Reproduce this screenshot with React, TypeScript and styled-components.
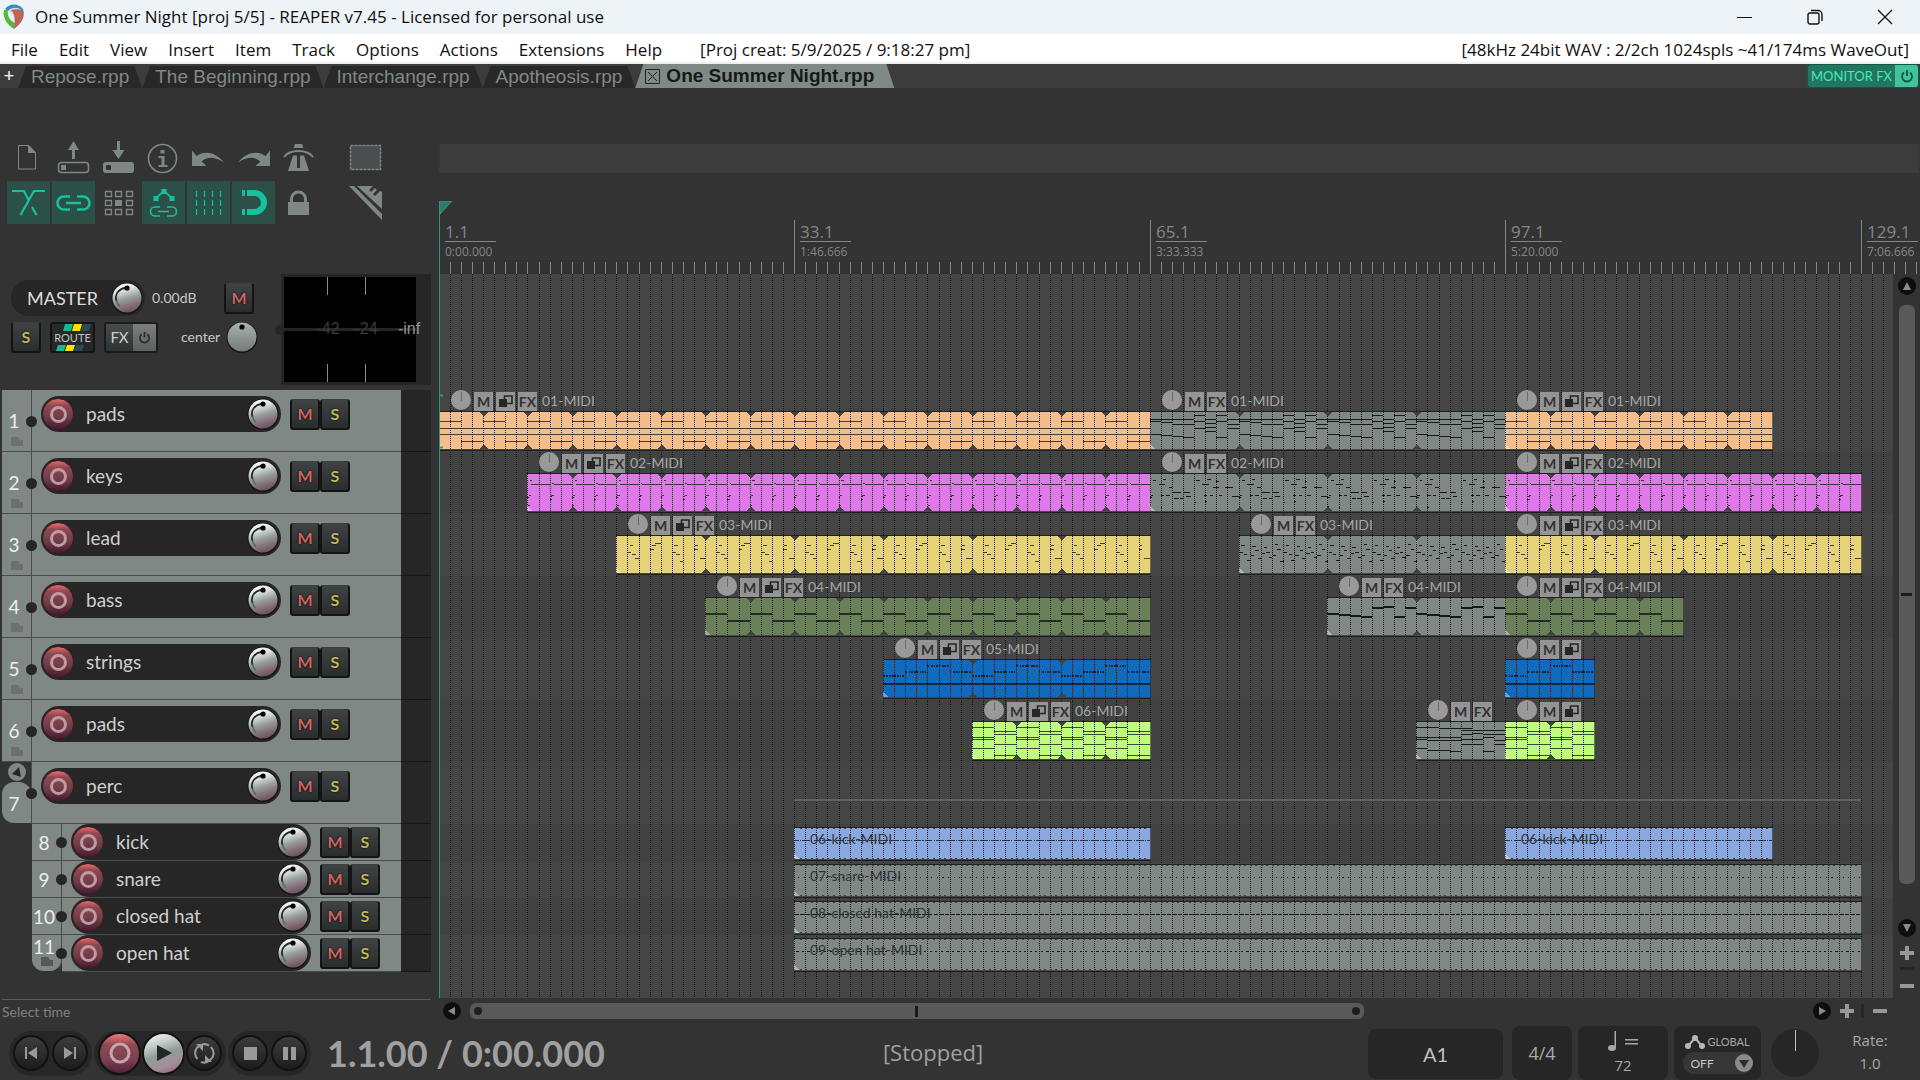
import React from "react";
import styled, { createGlobalStyle, css } from "styled-components";

const GlobalStyle = createGlobalStyle`
  *, *::before, *::after { box-sizing: border-box; }
  body { margin: 0; background: #333333; }
  button, input, select { font: inherit; color: inherit; margin: 0; padding: 0; border: 0; background: none; }
  ul, ol { list-style: none; margin: 0; padding: 0; }
  svg { display: block; }
`;

const ui = `"Open Sans", "Noto Sans", sans-serif`;
const face = `Lato, "Open Sans", sans-serif`;

/* ---------- geometry shared by the track list and the arrange view ---------- */

const MEASURE = 11.112;
const BIG = 62;
const SMALL = 37;
const px = (m: number) => Math.floor(m * MEASURE);

/* ---------- window chrome ---------- */

const Page = styled.div`
  min-height: 100vh;
  display: flex;
  flex-direction: column;
  background: #333333;
  font-family: ${face};
  color: #c8c8c8;
  overflow: hidden;
`;

const TitleBar = styled.header`
  height: 34px;
  display: flex;
  align-items: center;
  background: #eef3f8;
  color: #101010;
  font: 17px/24px ${ui};
`;

const Logo = styled.svg`
  width: 24px;
  height: 26px;
  margin: 0 9px 0 2px;
`;

const WindowButtons = styled.div`
  margin-left: auto;
  display: flex;
`;

const WindowButton = styled.button`
  width: 70px;
  height: 34px;
  display: grid;
  place-items: center;
`;

const MenuBar = styled.nav`
  height: 30px;
  display: flex;
  align-items: center;
  padding: 3px 11px 0 0;
  background: #ffffff;
  border-bottom: 2px solid #efefef;
  color: #101010;
  font: 17px/24px ${ui};
`;

const MenuItem = styled.button`
  padding: 0 10px 0 11px;
  white-space: nowrap;
`;

const Note = styled.span<{ $push?: boolean }>`
  white-space: nowrap;
  margin-left: ${(p) => (p.$push ? "auto" : "28px")};
`;

const TabBar = styled.div`
  height: 24px;
  display: flex;
  align-items: flex-end;
  background: #3c3c3c;
  font-family: "Liberation Sans", Arial, sans-serif;
`;

const AddTab = styled.button`
  width: 18px;
  height: 24px;
  color: #ffffff;
  font-size: 18px;
  line-height: 24px;
`;

const Tab = styled.button<{ $active?: boolean }>`
  display: flex;
  align-items: center;
  gap: 6px;
  white-space: nowrap;
  font-size: 19px;
  clip-path: polygon(8px 0, calc(100% - 8px) 0, 100% 100%, 0 100%);
  ${(p) =>
    p.$active
      ? css`
          height: 24px;
          padding: 0 20px 0 10px;
          background: #7f8a87;
          color: #161818;
          font-weight: bold;
          line-height: 24px;
        `
      : css`
          height: 22px;
          padding: 0 13px;
          background: #282828;
          color: #808886;
          line-height: 22px;
        `}
`;

const MonitorFx = styled.button`
  height: 24px;
  width: 112px;
  margin: 0 1px 0 auto;
  display: flex;
  align-items: stretch;
  border: 1px solid #0c5a46;
  border-radius: 4px;
  overflow: hidden;
  background: #22765f;
  color: #48e8b8;
  font: 13px/22px ${face};
`;

const MonitorText = styled.span`
  flex: 1;
  white-space: nowrap;
  text-align: center;
`;

const MonitorPower = styled.span`
  width: 23px;
  display: grid;
  place-items: center;
  background: #41c39b;
`;

/* ---------- workspace ---------- */

const Workspace = styled.main`
  flex: 1;
  display: grid;
  grid-template-columns: 439px minmax(0, 1fr);
`;

const LeftColumn = styled.section`
  display: flex;
  flex-direction: column;
  padding: 0 8px 0 2px;
`;

const Toolbar = styled.div`
  height: 186px;
  padding: 50px 0 0 5px;
  display: flex;
  flex-direction: column;
`;

const ToolRow = styled.div`
  display: flex;
  gap: 2px;
`;

const Tool = styled.button<{ $on?: boolean; $apart?: boolean }>`
  width: 43px;
  height: 43px;
  color: ${(p) => (p.$on ? "#16c19d" : "#808886")};
  background: ${(p) => (p.$on ? "#2b5048" : "transparent")};
  margin-left: ${(p) => (p.$apart ? "22px" : "0")};
`;

/* ---------- master panel ---------- */

const Master = styled.div`
  height: 116px;
  display: flex;
  justify-content: space-between;
`;

const MasterControls = styled.div`
  width: 256px;
  padding: 6px 0 0 9px;
  display: flex;
  flex-direction: column;
  gap: 3px;
`;

const ControlRow = styled.div<{ $inset?: boolean }>`
  height: 36px;
  padding-right: ${(p) => (p.$inset ? "4px" : "0")};
  display: flex;
  align-items: center;
`;

const MasterPill = styled.div`
  width: 134px;
  height: 36px;
  padding: 0 2px 0 16px;
  display: flex;
  align-items: center;
  justify-content: space-between;
  border-radius: 18px;
  background: #262626;
  font-size: 18px;
  line-height: 24px;
  color: #dcdcdc;
`;

const Readout = styled.span<{ $wide?: boolean }>`
  font-size: 14px;
  line-height: 20px;
  color: #c8c8c8;
  margin-left: ${(p) => (p.$wide ? "23px" : "7px")};
`;

const Push = styled.span`
  margin-left: auto;
  display: flex;
`;

const Meter = styled.div`
  position: relative;
  width: 150px;
  height: 111px;
  padding: 3px 15px 3px 3px;
  background: #262626;
`;

const MeterFace = styled.div`
  position: relative;
  height: 105px;
  background: linear-gradient(#262626, #262626) 0 51px / 100% 3px no-repeat,
    linear-gradient(#8a8a8a, #8a8a8a) 43px 0 / 1px 18px no-repeat,
    linear-gradient(#8a8a8a, #8a8a8a) 81px 0 / 1px 18px no-repeat,
    linear-gradient(#8a8a8a, #8a8a8a) 43px 100% / 1px 18px no-repeat,
    linear-gradient(#8a8a8a, #8a8a8a) 81px 100% / 1px 18px no-repeat, #000000;
`;

const MeterLabel = styled.span<{ $x: number; $bright?: boolean }>`
  position: absolute;
  top: 42px;
  left: ${(p) => p.$x}px;
  width: 28px;
  text-align: center;
  font: 16px/20px "Liberation Sans", Arial, sans-serif;
  color: ${(p) => (p.$bright ? "#8f9494" : "#3c3c3c")};
`;

const MeterDot = styled.span`
  position: absolute;
  left: -6px;
  top: 51px;
  width: 10px;
  height: 10px;
  border-radius: 50%;
  background: #262626;
`;

const Square = styled.button<{ $tone: string }>`
  width: 30px;
  height: 31px;
  display: grid;
  place-items: center;
  border: 2px solid #141414;
  border-top: 1px solid #3c3f3f;
  border-radius: 3px;
  background: linear-gradient(#3f4343, #2a2d2d);
  color: ${(p) => p.$tone};
  font: bold 16px/20px ${face};
  text-shadow: 0 0 2px #000000;
`;

const Route = styled.button`
  width: 45px;
  height: 31px;
  margin-left: 9px;
  overflow: hidden;
  border: 2px solid #141414;
  border-radius: 3px;
  color: #c4c4c4;
  font: 11px/14px ${face};
  text-align: center;
  display: flex;
  flex-direction: column;
  align-items: center;
  background: #262929;
`;

const FxPair = styled.span`
  display: flex;
  width: 54px;
  height: 31px;
  margin-left: 9px;
  border: 2px solid #1b1b1b;
  border-radius: 3px;
  overflow: hidden;
`;

const FxHalf = styled.button<{ $light?: boolean }>`
  flex: ${(p) => (p.$light ? "23" : "27")};
  display: grid;
  place-items: center;
  font: 15px/20px ${face};
  color: #cfcfcf;
  background: ${(p) =>
    p.$light ? "linear-gradient(#7b7f7f, #5c6060)" : "linear-gradient(#484c4c, #303333)"};
`;

/* ---------- knobs ---------- */

const KnobBox = styled.label<{ $size: number }>`
  position: relative;
  flex: none;
  width: ${(p) => p.$size}px;
  height: ${(p) => p.$size}px;
`;

const KnobInput = styled.input`
  position: absolute;
  inset: 0;
  width: 100%;
  height: 100%;
  opacity: 0;
`;

function Knob({ label, pan }: { label: string; pan?: boolean }) {
  return (
    <KnobBox $size={32}>
      <svg width="32" height="32" viewBox="0 0 32 32" aria-hidden="true">
        <defs>
          <linearGradient id="volFace" x1="0.35" y1="0" x2="0.65" y2="1">
            <stop offset="0" stopColor="#ffffff" />
            <stop offset="0.22" stopColor="#dfe3e2" />
            <stop offset="0.5" stopColor="#98a19e" />
            <stop offset="0.75" stopColor="#86707a" />
            <stop offset="1" stopColor="#64505b" />
          </linearGradient>
          <linearGradient id="panFace" x1="0" y1="0" x2="0" y2="1">
            <stop offset="0" stopColor="#aab2af" />
            <stop offset="1" stopColor="#747c79" />
          </linearGradient>
        </defs>
        <circle cx="16" cy="16.5" r="15.5" fill="#141414" />
        <circle cx="16" cy="16" r="14.5" fill={pan ? "url(#panFace)" : "url(#volFace)"} />
        {!pan && (
          <>
            <path d="M5.500 19C3.500 13 7 7 14 6" fill="none" stroke="#262b2a" strokeWidth="1.8" />
            <path d="M9 24.500C7 23 6 21 5.500 18.500" fill="none" stroke="#4d6a62" strokeWidth="1.5" />
          </>
        )}
        <circle cx="16" cy="6" r="2.6" fill="#000000" />
      </svg>
      <KnobInput type="range" min={0} max={100} defaultValue={50} aria-label={label} />
    </KnobBox>
  );
}

/* ---------- track list ---------- */

type Track = { n: number; name: string; kind: "normal" | "folder" | "child" | "last" };

const tracks: Track[] = [
  { n: 1, name: "pads", kind: "normal" },
  { n: 2, name: "keys", kind: "normal" },
  { n: 3, name: "lead", kind: "normal" },
  { n: 4, name: "bass", kind: "normal" },
  { n: 5, name: "strings", kind: "normal" },
  { n: 6, name: "pads", kind: "normal" },
  { n: 7, name: "perc", kind: "folder" },
  { n: 8, name: "kick", kind: "child" },
  { n: 9, name: "snare", kind: "child" },
  { n: 10, name: "closed hat", kind: "child" },
  { n: 11, name: "open hat", kind: "last" },
];

const TrackList = styled.ol`
  display: flex;
  flex-direction: column;
`;

const TrackRow = styled.li<{ $small: boolean }>`
  height: ${(p) => (p.$small ? SMALL : BIG)}px;
  padding-left: ${(p) => (p.$small ? 30 : 0)}px;
  display: grid;
  grid-template-columns: 30px minmax(0, 1fr) 30px;
`;

const NumberCell = styled.div<{ $kind: Track["kind"] }>`
  position: relative;
  display: flex;
  flex-direction: column;
  border-right: 1px solid #484d4b;
  border-bottom: 1px solid #484d4b;
  background: #808886;
  color: #eeeeee;
  font-size: 19px;
  line-height: 24px;
  ${(p) =>
    p.$kind === "folder" &&
    css`
      background: #333333;
      border-bottom-color: #333333;
    `}
  ${(p) =>
    p.$kind === "last" &&
    css`
      line-height: 20px;
      border-bottom-color: #333333;
      border-radius: 0 0 12px 12px;
    `}
`;

const numberTop = { normal: 19, folder: 0, child: 7, last: 2 };

const NumberText = styled.span<{ $kind: Track["kind"] }>`
  display: block;
  width: 24px;
  text-align: center;
  margin-top: ${(p) => numberTop[p.$kind]}px;
`;

const FolderBody = styled.div`
  flex: 1;
  padding-top: 10px;
  border-radius: 12px 12px 0 12px;
  background: #808886;
`;

const FolderToggle = styled.button`
  width: 18px;
  height: 18px;
  margin: 1px 0 1px 6px;
  display: grid;
  place-items: center;
  border-radius: 50%;
  background: #808886;
`;

const Dot = styled.span<{ $small: boolean }>`
  position: absolute;
  right: -6px;
  top: ${(p) => (p.$small ? 13 : 26)}px;
  width: 11px;
  height: 11px;
  border-radius: 50%;
  background: #262626;
`;

const FolderMark = styled.svg<{ $tight: boolean }>`
  flex: none;
  margin: ${(p) => (p.$tight ? 0 : 4)}px 0 0 9px;
`;

const Strip = styled.div<{ $small: boolean }>`
  display: flex;
  align-items: flex-start;
  padding: ${(p) => (p.$small ? 0 : 6)}px 0 0 9px;
  border-bottom: 1px solid #484d4b;
  background: #808886;
`;

const NamePill = styled.div`
  width: 240px;
  height: 36px;
  padding: 0 2px 0 1px;
  display: flex;
  align-items: center;
  border-radius: 18px;
  background: #262626;
`;

const RecArm = styled.button`
  width: 32px;
  height: 32px;
  border-radius: 50%;
  display: grid;
  place-items: center;
  border: 1px solid #3a1c24;
  background: linear-gradient(#e86a6c, #8e4850 22%, #6e3d48 60%, #471a30);
  &::after {
    content: "";
    width: 17px;
    height: 17px;
    border: 3px solid #c09aa0;
    border-radius: 50%;
  }
`;

const TrackName = styled.span`
  flex: 1;
  padding-left: 12px;
  font-size: 19px;
  line-height: 24px;
  color: #cfcfcf;
`;

const MuteSolo = styled.div`
  display: flex;
  margin: 3px 0 0 9px;
`;

const TrackMeter = styled.div`
  background: #262626;
  border-bottom: 1px solid #161616;
`;

function TrackItem({ t }: { t: Track }) {
  const small = t.kind === "child" || t.kind === "last";
  return (
    <TrackRow $small={small}>
      <NumberCell $kind={t.kind}>
        {t.kind === "folder" ? (
          <>
            <FolderToggle aria-label="Collapse folder">
              <svg width="12" height="12" viewBox="0 0 12 12">
                <path d="M1 8 8 1l2 10z" fill="#262626" />
              </svg>
            </FolderToggle>
            <FolderBody>
              <NumberText $kind="folder">{t.n}</NumberText>
            </FolderBody>
          </>
        ) : (
          <NumberText $kind={t.kind}>{t.n}</NumberText>
        )}
        {(t.kind === "normal" || t.kind === "last") && (
          <FolderMark $tight={small} width="12" height="9" viewBox="0 0 12 9">
            <path d="M0 0h7l2 3h3v6H0z" fill={small ? "#535958" : "#6a7170"} />
          </FolderMark>
        )}
        <Dot $small={small} />
      </NumberCell>
      <Strip $small={small}>
        <NamePill>
          <RecArm aria-label={`Record arm ${t.name}`} />
          <TrackName>{t.name}</TrackName>
          <Knob label={`Volume ${t.name}`} />
        </NamePill>
        <MuteSolo>
          <Square $tone="#cf6460">M</Square>
          <Square $tone="#c4b75c">S</Square>
        </MuteSolo>
      </Strip>
      <TrackMeter />
    </TrackRow>
  );
}

const Hint = styled.footer`
  margin-top: auto;
  height: 27px;
  border-top: 1px solid #5a5a5a;
  font-size: 14px;
  line-height: 24px;
  color: #808080;
`;

/* ---------- timeline ---------- */

const Timeline = styled.section`
  position: relative;
  display: flex;
  flex-direction: column;
  min-width: 0;
`;

const PlayCursor = styled.svg`
  position: absolute;
  left: 0;
  top: 113px;
  width: 14px;
  height: calc(100% - 141px);
  pointer-events: none;
`;

const RulerArea = styled.div`
  height: 186px;
  padding-top: 56px;
  display: flex;
  flex-direction: column;
  justify-content: space-between;
`;

const MarkerLane = styled.div`
  height: 29px;
  margin-right: 1px;
  background: #3c3c3c;
`;

const Ruler = styled.div`
  position: relative;
  height: 54px;
  overflow: hidden;
`;

const RulerTicks = styled.svg`
  position: absolute;
  inset: 0;
  width: 100%;
  height: 54px;
`;

const RulerLabel = styled.div`
  position: absolute;
  top: 0;
  padding-left: 6px;
  color: #868686;
`;

const Bar = styled.div`
  width: 51px;
  height: 22px;
  border-bottom: 1px solid #868686;
  font: 17px/24px ${ui};
`;

const Clock = styled.div`
  font: 12px/19px ${ui};
`;

const ArrangeRow = styled.div`
  flex: 1;
  display: flex;
  min-height: 0;
`;

const Arrange = styled.div`
  position: relative;
  flex: 1;
  min-width: 0;
  overflow: hidden;
  padding-top: 116px;
  background: #454545;
`;

const GridLines = styled.svg`
  position: absolute;
  inset: 0;
  width: 100%;
  height: 100%;
`;

const Lane = styled.div<{ $small: boolean; $odd: boolean }>`
  height: ${(p) => (p.$small ? SMALL : BIG)}px;
  background: ${(p) => (p.$odd ? "#424242" : "#454545")};
`;

const ItemLayer = styled.div`
  position: absolute;
  inset: 116px 0 0 0;
`;

const Clip = styled.div`
  position: absolute;
`;

const ClipHead = styled.div`
  height: 21px;
  padding-left: 12px;
  display: flex;
  align-items: flex-end;
  gap: 3px;
  white-space: nowrap;
`;

const ClipKnob = styled.button`
  width: 20px;
  height: 20px;
  margin-bottom: 1px;
  border-radius: 50%;
  background: linear-gradient(#6b6b6b, #6b6b6b) 50% 2px / 1px 9px no-repeat, #999999;
`;

const ClipButton = styled.button`
  width: 19px;
  height: 19px;
  display: grid;
  place-items: center;
  background: #949494;
  color: #333333;
  font: bold 14px/18px ${face};
`;

const ClipName = styled.span`
  padding: 0 0 1px 2px;
  font-size: 14px;
  line-height: 19px;
  color: #a2a6a6;
`;

const DrumName = styled.span`
  position: absolute;
  left: 16px;
  top: 2px;
  font-size: 14px;
  line-height: 19px;
  color: #303436;
  white-space: nowrap;
`;

/* [start measure, length in measures, y] */
type NoteMark = [number, number, number];
type Pattern = { loop: number; span: number; thick?: number; marks: NoteMark[] };

const both = (a: number, len: number, ys: number[]): NoteMark[] => ys.map((y) => [a, len, y]);

const patterns: Record<string, Pattern> = {
  padsLoop: { loop: 4, span: 4, marks: [[0, 2, 10], [0, 4, 17], [0, 4, 23], [2, 2, 30]] },
  padsGrey: {
    loop: 8,
    span: 8,
    marks: [
      [0, 4, 8], [0, 1, 10], [1, 1, 11], [2, 2, 13],
      [0, 1, 23], [1, 1, 24], [2, 1, 25], [3, 1, 26],
      ...both(4, 1, [4, 10, 17]), ...both(5, 1, [8, 12, 16, 20]),
      ...both(6, 1, [4, 10, 26]), ...both(7, 1, [8, 13, 17]),
    ],
  },
  keysLoop: {
    loop: 4,
    span: 4,
    marks: [
      [0.25, 0.2, 7], [0.35, 1.65, 11], [2.2, 0.15, 10], [2.35, 1.65, 11],
      [0, 0.15, 24], [0.1, 0.2, 22], [0.05, 0.15, 32],
      [2, 0.2, 26], [2.05, 0.15, 23], [2.15, 0.2, 22],
    ],
  },
  keysGrey: {
    loop: 8,
    span: 8,
    marks: [
      [0.3, 0.25, 7], [1.2, 0.3, 6], [4.2, 0.3, 7], [5.2, 0.3, 6], [6, 0.2, 8],
      [0.8, 0.6, 11], [1.7, 0.3, 14], [4.7, 0.6, 11], [5.7, 0.5, 14], [6.8, 0.7, 14],
      [2, 0.8, 19], [3, 0.6, 19], [1, 0.3, 22], [1.5, 0.3, 22], [0, 0.2, 24], [0.1, 0.2, 22],
      [2.2, 0.4, 25], [2.7, 0.4, 25], [3.3, 0.4, 23], [4, 0.2, 29], [5, 0.2, 28],
      [4.9, 0.3, 22], [5.4, 0.3, 22], [6.2, 0.3, 22], [7.4, 0.6, 23], [1, 0.15, 34], [0, 0.1, 33],
    ],
  },
  leadLoop: {
    loop: 8,
    span: 8,
    marks: [
      [1.2, 0.3, 10], [1, 0.35, 17], [1.4, 0.35, 19], [1.7, 0.35, 23],
      [3, 0.35, 14], [3.25, 0.35, 10], [3.5, 0.5, 8],
      [5.2, 0.35, 10], [5, 0.35, 17], [5.35, 0.35, 19], [5.7, 0.3, 26],
      [7, 0.35, 14], [7.1, 0.25, 10], [7.5, 0.5, 23],
    ],
  },
  leadGrey: {
    loop: 8,
    span: 8,
    marks: Array.from({ length: 8 }).flatMap((_, i): NoteMark[] => [
      [i + 0.25, 0.3, [10, 11, 12, 9][i % 4]],
      [i + 0.5, 0.3, [19, 15, 17, 14][i % 4]],
      [i + 0.1, 0.3, [17, 20, 18, 20][i % 4]],
      [i + 0.75, 0.3, [25, 23, 22, 26][i % 4]],
    ]),
  },
  bassLoop: { loop: 4, span: 4, thick: 2, marks: [[0, 2, 16], [2, 2, 23]] },
  bassGrey: {
    loop: 8,
    span: 8,
    thick: 2,
    marks: [
      [0, 1, 16], [1, 1, 17], [2, 1, 18], [3, 1, 19],
      [4, 1, 10], [5, 1, 9], [6, 1, 19], [7, 1, 10],
    ],
  },
  strings: {
    loop: 8,
    span: 8,
    thick: 2,
    marks: [
      ...[[0, 16], [2, 12], [4, 6], [6, 12]].flatMap(([a, y]): NoteMark[] =>
        [0, 0.3, 0.55, 0.8, 1, 1.3, 1.5, 1.75].map((d): NoteMark => [a + d, 0.16, y])
      ),
      [0, 8, 24],
    ],
  },
  pads6Loop: {
    loop: 4,
    span: 4,
    marks: [...both(0, 2, [6, 16, 18, 27]), ...both(2, 2, [10, 13, 23, 34])],
  },
  pads6Grey: {
    loop: 8,
    span: 8,
    marks: [
      [0, 2, 6], [2, 3, 7], [4, 1, 9], [5, 3, 9], [0, 4, 16], [0, 1, 18], [1, 3, 19],
      [4, 1, 13], [5, 1, 12], [6, 2, 13], [4, 2, 18], [6, 1, 16], [7, 1, 19],
      [0, 1, 27], [1, 1, 29], [2, 1, 29], [3, 1, 30], [4, 2, 23], [6, 1, 30], [7, 1, 23],
    ],
  },
  kick: { loop: 0.5, span: 1, marks: [[0, 0.45, 13], [0.55, 0.1, 13], [0.75, 0.25, 13]] },
  snare: { loop: 0.5, span: 1, marks: [[0.35, 0.1, 13], [0.85, 0.1, 13]] },
  closed: { loop: 0.5, span: 1, marks: [[0, 0.45, 13], [0.55, 0.4, 13]] },
  open: { loop: 0.5, span: 1, marks: [[0.2, 0.2, 13], [0.7, 0.2, 13]] },
};

const grey = "#808886";

type ClipData = {
  lane: number;
  from: number;
  to: number;
  color: string;
  pattern: string;
  name?: string;
  pooled?: boolean;
  fx?: boolean;
  inner?: boolean;
};

const clips: ClipData[] = [
  { lane: 0, from: 0, to: 64, color: "#f5bd88", pattern: "padsLoop", name: "01-MIDI", pooled: true, fx: true },
  { lane: 0, from: 64, to: 96, color: grey, pattern: "padsGrey", name: "01-MIDI", fx: true },
  { lane: 0, from: 96, to: 120, color: "#f5bd88", pattern: "padsLoop", name: "01-MIDI", pooled: true, fx: true },
  { lane: 1, from: 8, to: 64, color: "#df78e8", pattern: "keysLoop", name: "02-MIDI", pooled: true, fx: true },
  { lane: 1, from: 64, to: 96, color: grey, pattern: "keysGrey", name: "02-MIDI", fx: true },
  { lane: 1, from: 96, to: 128, color: "#df78e8", pattern: "keysLoop", name: "02-MIDI", pooled: true, fx: true },
  { lane: 2, from: 16, to: 64, color: "#e6d277", pattern: "leadLoop", name: "03-MIDI", pooled: true, fx: true },
  { lane: 2, from: 72, to: 96, color: grey, pattern: "leadGrey", name: "03-MIDI", fx: true },
  { lane: 2, from: 96, to: 128, color: "#e6d277", pattern: "leadLoop", name: "03-MIDI", pooled: true, fx: true },
  { lane: 3, from: 24, to: 64, color: "#698058", pattern: "bassLoop", name: "04-MIDI", pooled: true, fx: true },
  { lane: 3, from: 80, to: 96, color: grey, pattern: "bassGrey", name: "04-MIDI", fx: true },
  { lane: 3, from: 96, to: 112, color: "#698058", pattern: "bassLoop", name: "04-MIDI", pooled: true, fx: true },
  { lane: 4, from: 40, to: 64, color: "#106bbf", pattern: "strings", name: "05-MIDI", pooled: true, fx: true },
  { lane: 4, from: 96, to: 104, color: "#106bbf", pattern: "strings", pooled: true },
  { lane: 5, from: 48, to: 64, color: "#bffc7c", pattern: "pads6Loop", name: "06-MIDI", pooled: true, fx: true },
  { lane: 5, from: 88, to: 96, color: grey, pattern: "pads6Grey", fx: true },
  { lane: 5, from: 96, to: 104, color: "#bffc7c", pattern: "pads6Loop", pooled: true },
  { lane: 7, from: 32, to: 64, color: "#8aa8e0", pattern: "kick", name: "06-kick-MIDI", inner: true },
  { lane: 7, from: 96, to: 120, color: "#8aa8e0", pattern: "kick", name: "06-kick-MIDI", inner: true },
  { lane: 8, from: 32, to: 128, color: grey, pattern: "snare", name: "07-snare-MIDI", inner: true },
  { lane: 9, from: 32, to: 128, color: grey, pattern: "closed", name: "08-closed hat-MIDI", inner: true },
  { lane: 10, from: 32, to: 128, color: grey, pattern: "open", name: "09-open hat-MIDI", inner: true },
];

const laneTop = (lane: number) => Math.min(lane, 7) * BIG + Math.max(0, lane - 7) * SMALL;

function ClipBody({ c }: { c: ClipData }) {
  const p = patterns[c.pattern];
  const x0 = px(c.from);
  const width = px(c.to) - x0 + 1;
  const height = c.inner ? 34 : 40;
  const foot = height - 2;
  const thick = p.thick ?? 1;
  let notes = "";
  for (let m = c.from; m < c.to; m += p.span) {
    for (const [a, len, y] of p.marks) {
      const left = px(m + a) - x0;
      const w = Math.max(1, px(Math.min(m + a + len, c.to)) - x0 - left);
      notes += `M${left} ${y}h${w}v${thick}h${-w}z`;
    }
  }
  let notches = "";
  const r = c.inner ? 1 : 4;
  for (let m = c.from + p.loop; m < c.to; m += p.loop) {
    const x = px(m) - x0;
    notches += `M${x - r} 1h${2 * r + 1}l${-r} ${r}h-1zM${x - r} ${foot}h${2 * r + 1}l${-r} ${-r}h-1z`;
  }
  let lines = "";
  for (let m = c.from; m < c.to; m += 1) lines += `M${px(m) - x0 + 0.5} 1V${foot}`;
  return (
    <svg width={width} height={height} shapeRendering="crispEdges" aria-hidden="true">
      <rect width={width} height={height} fill="#484848" />
      <rect y="1" width={width} height={foot - 1} fill={c.color} />
      <path d={notes} fill="#101214" fillOpacity={c.color === grey ? 0.95 : 0.75} />
      <path d={lines} stroke="#101010" strokeDasharray="1 1" />
      <path d={notches} fill="#424242" />
      <path d={`M0 ${foot - 5}l5 5H0z`} fill="#ffffff" fillOpacity="0.4" />
      <rect width={width} height="1" fill="#222222" />
      <rect y={height - 1} width={width} height="1" fill="#1e1e1e" />
      <rect x={width - 1} width="1" height={height} fill="#222222" fillOpacity="0.6" />
    </svg>
  );
}

function ClipView({ c }: { c: ClipData }) {
  return (
    <Clip style={{ left: px(c.from), top: laneTop(c.lane) + (c.inner ? 3 : 0) }}>
      {!c.inner && (
        <ClipHead>
          <ClipKnob aria-label="Item volume" />
          <ClipButton>M</ClipButton>
          {c.pooled && (
            <ClipButton aria-label="Pooled source">
              <svg width="15" height="13" viewBox="0 0 15 13">
                <path d="M6.500 1h7.500v7.500H6.500z" fill="none" stroke="#262626" strokeWidth="1.600" />
                <path d="M1 4h8v8H1z" fill="#262626" />
              </svg>
            </ClipButton>
          )}
          {c.fx && <ClipButton>FX</ClipButton>}
          {c.name && <ClipName>{c.name}</ClipName>}
        </ClipHead>
      )}
      <ClipBody c={c} />
      {c.inner && <DrumName>{c.name}</DrumName>}
    </Clip>
  );
}

const FolderTrace = styled.div`
  position: absolute;
  height: 2px;
  background: #606060;
`;

const ticks = Array.from({ length: 360 }, (_, i) => i);
const rulerMarks = [
  { m: 0, bar: "1.1", time: "0:00.000" },
  { m: 32, bar: "33.1", time: "1:46.666" },
  { m: 64, bar: "65.1", time: "3:33.333" },
  { m: 96, bar: "97.1", time: "5:20.000" },
  { m: 128, bar: "129.1", time: "7:06.666" },
];

/* ---------- scroll bars ---------- */

const VScroll = styled.div`
  width: 27px;
  padding: 3px 0 5px;
  display: flex;
  flex-direction: column;
  align-items: center;
`;

const HScroll = styled.div`
  height: 28px;
  padding: 0 33px 2px 4px;
  display: flex;
  align-items: center;
`;

const RoundArrow = styled.button`
  width: 18px;
  height: 18px;
  flex: none;
  display: grid;
  place-items: center;
  border-radius: 50%;
  background: #0e0e0e;
`;

const VTrack = styled.div`
  flex: 1;
  width: 16px;
  padding: 10px 0 35px;
  display: flex;
`;

const VThumb = styled.div`
  flex: 1;
  border-radius: 6px;
  background: linear-gradient(#1c1c1c, #1c1c1c) 50% 50% / 11px 3px no-repeat, #595959;
`;

const HTrack = styled.div`
  flex: 1;
  margin: 0 9px;
`;

const HThumb = styled.div`
  width: 67%;
  height: 16px;
  padding: 0 4px;
  display: flex;
  justify-content: space-between;
  align-items: center;
  border-radius: 6px;
  background: linear-gradient(#1c1c1c, #1c1c1c) 50% 50% / 3px 11px no-repeat, #595959;
`;

const Grip = styled.span`
  width: 8px;
  height: 8px;
  border-radius: 50%;
  background: #1e1e1e;
`;

const ZoomButton = styled.button<{ $vertical?: boolean }>`
  width: 14px;
  height: 14px;
  flex: none;
  margin: ${(p) => (p.$vertical ? "9px 0 0" : "0 0 0 9px")};
`;

const ZoomGap = styled.span<{ $vertical?: boolean }>`
  flex: none;
  background: #262626;
  width: ${(p) => (p.$vertical ? "14px" : "3px")};
  height: ${(p) => (p.$vertical ? "3px" : "14px")};
  margin: ${(p) => (p.$vertical ? "7px 0 0" : "0 0 0 7px")};
`;

const Plus = () => (
  <svg width="14" height="14" viewBox="0 0 14 14">
    <path d="M5 0h4v5h5v4H9v5H5V9H0V5h5z" fill="#989898" />
  </svg>
);
const Minus = () => (
  <svg width="14" height="14" viewBox="0 0 14 14">
    <path d="M0 5h14v4H0z" fill="#989898" />
  </svg>
);
const Arrow = ({ d }: { d: string }) => (
  <svg width="10" height="10" viewBox="0 0 10 10">
    <path d={d} fill="#8c8c8c" />
  </svg>
);

/* ---------- transport ---------- */

const Transport = styled.footer`
  height: 54px;
  display: flex;
  align-items: center;
  padding: 0 25px 0 9px;
`;

const Cluster = styled.div<{ $gap?: number }>`
  height: 45px;
  margin-right: 2px;
  padding: 0 4px;
  display: flex;
  align-items: center;
  gap: ${(p) => p.$gap ?? 3}px;
  border-radius: 23px;
  background: #272727;
`;

const faces = {
  dark: "linear-gradient(#3c3c3c, #1c1c1c)",
  rec: "linear-gradient(#f07678, #8e4850 28%, #7c4250 65%, #54203a)",
  play: "linear-gradient(160deg, #ffffff, #c2cac7 30%, #8f9d98 50%, #a58e9a 75%, #84606f)",
};

const RoundButton = styled.button<{ $face: keyof typeof faces }>`
  width: ${(p) => (p.$face === "dark" ? 36 : 43)}px;
  height: ${(p) => (p.$face === "dark" ? 36 : 43)}px;
  flex: none;
  display: grid;
  place-items: center;
  border: 2px solid #121212;
  border-radius: 50%;
  background: ${(p) => faces[p.$face]};
`;

const Position = styled.output`
  margin-left: 14px;
  flex: 55 1 0;
  white-space: nowrap;
  font: bold 36px/44px ${face};
  color: #a0a0a0;
`;

const State = styled.output`
  flex: 48 1 0;
  font: 22px/28px ${ui};
  padding-bottom: 2px;
  color: #a0a0a0;
`;

const Right = styled.div`
  display: flex;
  justify-content: flex-end;
  align-items: center;
`;

const Panel = styled.div<{ $w: number }>`
  width: ${(p) => p.$w}px;
  height: 54px;
  margin-left: 6px;
  flex: none;
  display: flex;
  flex-direction: column;
  align-items: center;
  justify-content: center;
  border-radius: 8px;
  background: #262626;
  color: #a8a8a8;
`;

const Selection = styled.button`
  width: 135px;
  height: 50px;
  margin: 2px 3px 0 0;
  border-radius: 8px;
  background: #262626;
  color: #c0c0c0;
  font-size: 20px;
  line-height: 24px;
`;

const Signature = styled.button`
  font: 18px/24px ${ui};
`;

const Tempo = styled.label`
  display: flex;
  flex-direction: column;
  align-items: center;
`;

const NumberField = styled.input`
  width: 50px;
  height: 22px;
  text-align: center;
  font: 15px/22px ${ui};
  color: #a8a8a8;
`;

const GlobalHead = styled.label`
  display: flex;
  align-items: center;
  gap: 2px;
  font-size: 11px;
  line-height: 20px;
`;

const GlobalMode = styled.div`
  position: relative;
  width: 70px;
  height: 22px;
  border-radius: 11px;
  background: #363636;
`;

const GlobalSelect = styled.select`
  appearance: none;
  width: 70px;
  height: 22px;
  padding-left: 8px;
  font: 12px/22px ${face};
  color: #c8c8c8;
`;

const Caret = styled.svg`
  position: absolute;
  right: 0;
  top: 2px;
  pointer-events: none;
`;

const RateKnob = styled.button`
  width: 48px;
  height: 48px;
  margin: 0 26px 0 10px;
  flex: none;
  border-radius: 50%;
  background: linear-gradient(#c0c0c0, #c0c0c0) 50% 1px / 1px 21px no-repeat, #262626;
`;

const Rate = styled.label`
  width: 50px;
  display: flex;
  flex-direction: column;
  align-items: center;
  padding-bottom: 4px;
  font: 15px/24px ${ui};
  color: #a8a8a8;
`;

/* ---------- icons ---------- */

const s = { fill: "none", stroke: "currentColor" } as const;
const Ico = ({ children }: { children: React.ReactNode }) => (
  <svg width="43" height="43" viewBox="0 0 43 43" fill="currentColor" aria-hidden="true">
    {children}
  </svg>
);

const topTools = [
  { label: "New project", icon: <><path {...s} d="M11.5 7.5h10.500l6.500 7v16.500h-17z" /><path d="M21 7v8h8z" /></> },
  { label: "Open project", icon: <><path d="M16 12 21.500 3 27 12h-4v9h-3v-9z" /><rect {...s} strokeWidth="1.6" x="6.500" y="24.500" width="30" height="10" rx="3" /><path d="M9 27h5v5H9z" /></> },
  { label: "Save project", icon: <><path d="M20 3h3v9h4.500l-6 9-6-9H20z" /><rect x="6" y="24" width="31" height="11" rx="3" /><rect x="9" y="27" width="5" height="5" rx="1" fill="#333333" /></> },
  { label: "Project settings", icon: <><circle {...s} strokeWidth="1.6" cx="20.500" cy="20.500" r="14" /><path d="M18.500 12h4v3.500h-4zM16.500 18h6v9h3v2h-9v-2h3v-7h-3z" /></> },
  { label: "Undo", icon: <path d="M5 12.500v15.500h14.500l-5-4.500c6-5 13-5 22.500 1C29 14 17 12 9.500 18z" /> },
  { label: "Redo", icon: <path d="M38 12.500v15.500H23.500l5-4.500C22.500 18.500 15.500 18.500 6 24.500 14 14 26 12 33.500 18z" /> },
  { label: "Metronome", icon: <><path d="M18 6h7l1.500 4h-10z" /><path {...s} strokeWidth="2" d="M7 19C13 11 30 11 36 19" /><path d="M16 17.500h4V30h3V17.500h4L32 33H11z" /></> },
];

const bottomTools = [
  { label: "Auto crossfade", on: true, icon: <path {...s} strokeWidth="2.200" d="M5 10h12l5 10M25 26l4.500 8M38 10H27L13.500 34" /> },
  { label: "Item grouping", on: true, icon: <path {...s} strokeWidth="2.600" d="M18 15.500H12a6.500 6.500 0 0 0 0 13h6M25 15.500h6a6.500 6.500 0 0 1 0 13h-6M14 22h15" /> },
  { label: "Ripple editing", icon: <><path {...s} strokeWidth="1.300" d="M8.500 10.500h6v5h-6zM18.500 10.500h6v5h-6zM29.500 10.500h6v5h-6zM8.500 19.500h6v5h-6zM29.500 19.500h6v5h-6zM8.500 28.500h6v5h-6zM18.500 28.500h6v5h-6zM29.500 28.500h6v5h-6z" /><path d="M18 19h7v6h-7z" /></> },
  { label: "Move envelopes with items", on: true, icon: <><path {...s} strokeWidth="1.800" d="M14 17l8-7 8 7" /><path d="M11.500 15h5v5h-5zM19.500 8h5v5h-5zM27.500 15h5v5h-5z" /><path {...s} strokeWidth="1.600" d="M18 26h-5a4.500 4.500 0 0 0 0 9h5M25 26h5a4.500 4.500 0 0 1 0 9h-5M16 30.500h11" /></> },
  { label: "Grid lines", on: true, icon: <path {...s} strokeWidth="1.200" strokeDasharray="6 3" d="M9.500 10v25M17.500 10v25M25.500 10v25M33.500 10v25" /> },
  { label: "Snap to grid", on: true, icon: <><path d="M10 9h3v6h-3zM10 28h3v6h-3z" /><path {...s} strokeWidth="6" d="M15 12h7.500a9.500 9.500 0 0 1 0 19H15" /></> },
  { label: "Locking", icon: <><path {...s} strokeWidth="3" d="M14.500 24v-6a7 7 0 0 1 14 0v6" /><path d="M11 21h21v13H11z" /></> },
];

const Power = ({ color, size }: { color: string; size: number }) => (
  <svg width={size} height={size} viewBox="0 0 14 14" fill="none" stroke={color} strokeWidth="1.800">
    <path d="M4 3.500a5 5 0 1 0 6 0M7 1v6" />
  </svg>
);

export default function App() {
  return (
    <Page>
      <GlobalStyle />
      <TitleBar>
        <Logo viewBox="0 0 24 26">
          <path d="M3 5C7-1 17-1 21 5l1 5-5-4C13 3 9 4 6 7z" fill="#2c8ed0" />
          <path d="M2 6c-2 7 3 15 10 19l1-6C7 16 5 11 6 6z" fill="#58b83a" />
          <path d="M6 7C10 3 16 3 19 6c-1 5-3 9-6 13-2-4 0-7-7-12z" fill="#ded8d6" />
          <path d="M9 6c5-1 9-1 12 1 3 6-3 14-9 18 1-8 2-14-3-19z" fill="#bb6459" />
        </Logo>
        One Summer Night [proj 5/5] - REAPER v7.45 - Licensed for personal use
        <WindowButtons>
          <WindowButton aria-label="Minimize">
            <svg width="16" height="16"><path d="M0 8.500h15" stroke="#111" /></svg>
          </WindowButton>
          <WindowButton aria-label="Restore">
            <svg width="16" height="16" fill="none" stroke="#111" strokeWidth="1.400">
              <rect x="1" y="4" width="11" height="11" rx="2" />
              <path d="M4 1.500h7a4 4 0 0 1 4 4V12" />
            </svg>
          </WindowButton>
          <WindowButton aria-label="Close">
            <svg width="16" height="16"><path d="M1 1l14 14M15 1 1 15" stroke="#111" strokeWidth="1.300" /></svg>
          </WindowButton>
        </WindowButtons>
      </TitleBar>
      <MenuBar>
        {["File", "Edit", "View", "Insert", "Item", "Track", "Options", "Actions", "Extensions", "Help"].map((m) => (
          <MenuItem key={m}>{m}</MenuItem>
        ))}
        <Note>[Proj creat: 5/9/2025 / 9:18:27 pm]</Note>
        <Note $push>[48kHz 24bit WAV : 2/2ch 1024spls ~41/174ms WaveOut]</Note>
      </MenuBar>
      <TabBar>
        <AddTab aria-label="New project tab">+</AddTab>
        {["Repose.rpp", "The Beginning.rpp", "Interchange.rpp", "Apotheosis.rpp"].map((t) => (
          <Tab key={t}>{t}</Tab>
        ))}
        <Tab $active>
          <svg width="15" height="15" fill="none" stroke="#202424">
            <path d="M.5.500h14v14H.5zM3 3l9 9M12 3l-9 9" />
          </svg>
          One Summer Night.rpp
        </Tab>
        <MonitorFx>
          <MonitorText>MONITOR FX</MonitorText>
          <MonitorPower><Power color="#0c5a46" size={14} /></MonitorPower>
        </MonitorFx>
      </TabBar>

      <Workspace>
        <LeftColumn>
          <Toolbar>
            <ToolRow>
              {topTools.map((t) => (
                <Tool key={t.label} aria-label={t.label}><Ico>{t.icon}</Ico></Tool>
              ))}
              <Tool $apart aria-label="Marquee selection">
                <Ico><rect x="6.500" y="7.500" width="30" height="24" fill="#4a4f50" stroke="currentColor" strokeWidth="1.500" strokeDasharray="3 1" /></Ico>
              </Tool>
            </ToolRow>
            <ToolRow>
              {bottomTools.map((t) => (
                <Tool key={t.label} $on={t.on} aria-label={t.label}><Ico>{t.icon}</Ico></Tool>
              ))}
              <Tool $apart aria-label="Razor edit">
                <Ico>
                  <path d="M5 5h5l28 28v6z" />
                  <path d="M13 5h16l-4 4 2 2 4-4 2 2-4 4 2 2 5-5 2 1v17z" />
                </Ico>
              </Tool>
            </ToolRow>
          </Toolbar>

          <Master>
            <MasterControls>
              <ControlRow $inset>
                <MasterPill>MASTER<Knob label="Master volume" /></MasterPill>
                <Readout>0.00dB</Readout>
                <Push><Square $tone="#cf6460">M</Square></Push>
              </ControlRow>
              <ControlRow>
                <Square $tone="#c4b75c">S</Square>
                <Route>
                  <svg width="41" height="7"><path d="M13 0h8l-2 7h-8z" fill="#17b894" /><path d="M22 0h8l-2 7h-8z" fill="#ffe000" /><path d="M31 0h8l-2 7h-8z" fill="#2c4a5c" /></svg>
                  ROUTE
                  <svg width="41" height="6"><path d="M6 0h8l-2 6H4z" fill="#17b894" /><path d="M15 0h8l-2 6h-8z" fill="#ffe000" /><path d="M24 0h8l-2 6h-8z" fill="#2c4a5c" /></svg>
                </Route>
                <FxPair>
                  <FxHalf>FX</FxHalf>
                  <FxHalf $light aria-label="Bypass effects"><Power color="#2a2a2a" size={13} /></FxHalf>
                </FxPair>
                <Readout $wide>center</Readout>
                <Push><Knob pan label="Master pan" /></Push>
              </ControlRow>
            </MasterControls>
            <Meter>
              <MeterFace>
                <MeterLabel $x={30}>-42</MeterLabel>
                <MeterLabel $x={68}>-24</MeterLabel>
                <MeterLabel $x={111} $bright>-inf</MeterLabel>
              </MeterFace>
              <MeterDot />
            </Meter>
          </Master>

          <TrackList>
            {tracks.map((t) => <TrackItem key={t.n} t={t} />)}
          </TrackList>
          <Hint>Select time</Hint>
        </LeftColumn>

        <Timeline>
          <RulerArea>
            <MarkerLane />
            <Ruler>
              <RulerTicks shapeRendering="crispEdges">
                <path d={ticks.map((i) => `M${px(i) + 0.5} ${i % 32 ? 42 : 0}V54`).join("")} stroke="#868686" />
              </RulerTicks>
              {rulerMarks.map((r) => (
                <RulerLabel key={r.m} style={{ left: px(r.m) }}>
                  <Bar>{r.bar}</Bar>
                  <Clock>{r.time}</Clock>
                </RulerLabel>
              ))}
            </Ruler>
          </RulerArea>
          <ArrangeRow>
            <Arrange>
              {tracks.map((t, i) => <Lane key={t.n} $small={i > 6} $odd={i % 2 === 1} />)}
              <GridLines shapeRendering="crispEdges">
                <path d={ticks.map((i) => `M${px(i) + 0.5} 0V2400`).join("")} stroke="#121212" strokeDasharray="1 1" />
              </GridLines>
              <ItemLayer>
                <FolderTrace style={{ left: px(32), top: laneTop(6) + 37, width: px(128) - px(32) }} />
                {clips.map((c) => <ClipView key={`${c.lane}-${c.from}`} c={c} />)}
              </ItemLayer>
            </Arrange>
            <VScroll>
              <RoundArrow aria-label="Scroll up"><Arrow d="M5 1l4 8H1z" /></RoundArrow>
              <VTrack><VThumb /></VTrack>
              <RoundArrow aria-label="Scroll down"><Arrow d="M5 9 1 1h8z" /></RoundArrow>
              <ZoomButton $vertical aria-label="Zoom in vertically"><Plus /></ZoomButton>
              <ZoomGap $vertical />
              <ZoomButton $vertical aria-label="Zoom out vertically"><Minus /></ZoomButton>
            </VScroll>
          </ArrangeRow>
          <HScroll>
            <RoundArrow aria-label="Scroll left"><Arrow d="M1 5l7-4v8z" /></RoundArrow>
            <HTrack><HThumb><Grip /><Grip /></HThumb></HTrack>
            <RoundArrow aria-label="Scroll right"><Arrow d="M9 5 2 1v8z" /></RoundArrow>
            <ZoomButton aria-label="Zoom in"><Plus /></ZoomButton>
            <ZoomGap />
            <ZoomButton aria-label="Zoom out"><Minus /></ZoomButton>
          </HScroll>
          <PlayCursor>
            <path d="M0 0h13L1 13z" fill="#2f7a6b" stroke="#7e9a93" strokeWidth="0.600" />
            <path d="M.5 0V2400" stroke="#2f9482" />
            <path d="M0 194.500h4M0 246.500h4" stroke="#2f9482" strokeWidth="2" />
          </PlayCursor>
        </Timeline>
      </Workspace>

      <Transport>
        <Cluster>
          <RoundButton $face="dark" aria-label="Go to start">
            <svg width="14" height="12" fill="#9a9a9a"><path d="M1 0h2v12H1zM13 0v12L4 6z" /></svg>
          </RoundButton>
          <RoundButton $face="dark" aria-label="Go to end">
            <svg width="14" height="12" fill="#9a9a9a"><path d="M11 0h2v12h-2zM1 0v12l9-6z" /></svg>
          </RoundButton>
        </Cluster>
        <Cluster $gap={1}>
          <RoundButton $face="rec" aria-label="Record">
            <svg width="22" height="22" fill="none" stroke="#c9a4aa" strokeWidth="3"><circle cx="11" cy="11" r="9" /></svg>
          </RoundButton>
          <RoundButton $face="play" aria-label="Play">
            <svg width="16" height="16" fill="#262626"><path d="M1 0v16l15-8z" /></svg>
          </RoundButton>
          <RoundButton $face="dark" aria-label="Repeat">
            <svg width="22" height="22" viewBox="0 0 22 22" fill="none" stroke="#9a9a9a" strokeWidth="2">
              <path d="M4.500 17A8.500 8.500 0 0 1 6 4M8 20a8.500 8.500 0 0 0 9-2M18 5a8.500 8.500 0 0 1-1 13M9 2.500a8.500 8.500 0 0 1 7 1" />
              <path d="M3 2h7v7zM19 20h-7v-7z" fill="#9a9a9a" stroke="none" />
            </svg>
          </RoundButton>
        </Cluster>
        <Cluster>
          <RoundButton $face="dark" aria-label="Stop">
            <svg width="13" height="13" fill="#9a9a9a"><path d="M0 0h13v13H0z" /></svg>
          </RoundButton>
          <RoundButton $face="dark" aria-label="Pause">
            <svg width="13" height="13" fill="#9a9a9a"><path d="M0 0h5v13H0zM8 0h5v13H8z" /></svg>
          </RoundButton>
        </Cluster>
        <Position>1.1.00 / 0:00.000</Position>
        <State>[Stopped]</State>
        <Right>
          <Selection>A1</Selection>
          <Panel $w={60}><Signature>4/4</Signature></Panel>
          <Panel $w={90}>
            <Tempo>
              <svg width="32" height="24" viewBox="0 0 32 24" fill="#a8a8a8">
                <ellipse cx="5" cy="18" rx="4" ry="3" />
                <path d="M7.500 1h1.500v17H7.500zM18 9h13v1.500H18zM18 13h13v1.500H18z" />
              </svg>
              <NumberField defaultValue="72" aria-label="Tempo" />
            </Tempo>
          </Panel>
          <Panel $w={87}>
            <GlobalHead htmlFor="global-mode">
              <svg width="20" height="14" viewBox="0 0 20 14" fill="#b8b8b8">
                <path d="M3 11 10 3l7 8" fill="none" stroke="#b8b8b8" strokeWidth="2" />
                <circle cx="3" cy="11" r="3" /><circle cx="10" cy="3" r="3" /><circle cx="17" cy="11" r="3" />
              </svg>
              GLOBAL
            </GlobalHead>
            <GlobalMode>
              <GlobalSelect id="global-mode"><option>OFF</option></GlobalSelect>
              <Caret width="18" height="18"><circle cx="9" cy="9" r="9" fill="#8a8a8a" /><path d="M4 6h10l-5 8z" fill="#2e2e2e" /></Caret>
            </GlobalMode>
          </Panel>
          <RateKnob aria-label="Playback rate" />
          <Rate>
            Rate:
            <NumberField defaultValue="1.0" />
          </Rate>
        </Right>
      </Transport>
    </Page>
  );
}
